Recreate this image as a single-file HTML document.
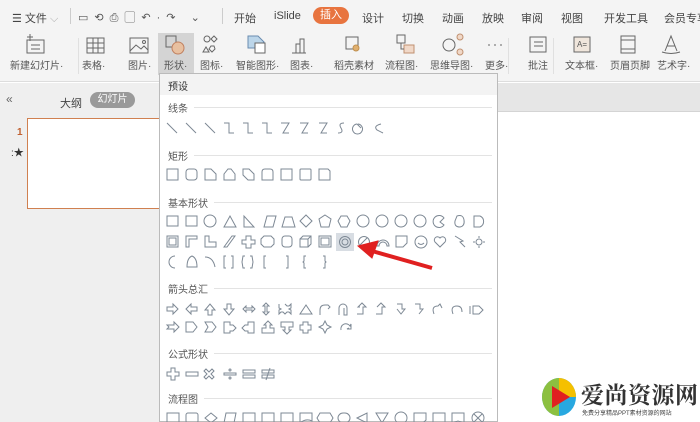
<!DOCTYPE html>
<html><head><meta charset="utf-8"><style>
*{margin:0;padding:0;box-sizing:border-box}
body{width:700px;height:422px;overflow:hidden;position:relative;background:#fff;font-family:"Liberation Sans","Noto Sans CJK SC",sans-serif;color:#333}
.a{position:absolute;white-space:nowrap}
.t{font-size:11px;color:#444}
.lbl{font-size:10px;color:#555}
.sec{position:absolute;left:168px;font-size:10px;color:#555;background:#fff;padding-right:6px}
.ln{position:absolute;left:168px;width:324px;height:1px;background:#e3e3e3}
</style></head><body>
<div class="a" style="left:0;top:0;width:700px;height:32px;background:#f4f4f4"></div>
<div class="a" style="left:0;top:32px;width:700px;height:50px;background:#f4f4f4;border-bottom:1px solid #ddd"></div>
<div class="a t" style="left:12px;top:10px">☰ 文件 <span style="color:#aaa">⌵</span></div>
<div class="a" style="left:70px;top:8px;width:1px;height:16px;background:#ccc"></div>
<div class="a t" style="left:78px;top:9px;letter-spacing:6px;color:#555">▭⟲⎙▢↶·↷ ⌄</div>
<div class="a" style="left:222px;top:8px;width:1px;height:16px;background:#ccc"></div>
<div class="a t" style="left:234px;top:10px">开始</div>
<div class="a t" style="left:274px;top:10px">iSlide</div>
<div class="a" style="left:313px;top:7px;width:36px;height:17px;border-radius:9px;background:#e8743f;color:#fff;font-size:11px;text-align:center;line-height:17px">插入</div>
<div class="a t" style="left:362px;top:10px">设计</div>
<div class="a t" style="left:402px;top:10px">切换</div>
<div class="a t" style="left:442px;top:10px">动画</div>
<div class="a t" style="left:482px;top:10px">放映</div>
<div class="a t" style="left:521px;top:10px">审阅</div>
<div class="a t" style="left:561px;top:10px">视图</div>
<div class="a t" style="left:604px;top:10px">开发工具</div>
<div class="a t" style="left:664px;top:10px">会员专享</div>
<div class="a" style="left:158px;top:33px;width:36px;height:42px;background:#d4d4d4"></div>
<svg class="a" style="left:0;top:32px" width="700" height="30" fill="none" stroke="#666" stroke-width="1">
<rect x="27" y="8" width="17" height="13"/><line x1="31" y1="13" x2="40" y2="13"/><line x1="31" y1="17" x2="40" y2="17"/><path d="M30 2v7M27 5h6"/>
<rect x="87" y="6" width="17" height="15"/><path d="M87 11h17M87 16h17M93 6v15M98 6v15"/>
<rect x="130" y="6" width="18" height="15"/><path d="M130 19l6-6 5 4 3-3 4 4"/><circle cx="144" cy="10" r="1.5"/>
<rect x="166" y="4" width="10" height="11"/><circle cx="178" cy="16" r="6" fill="#e8c0a0" stroke="#c08060"/>
<circle cx="207" cy="7" r="3"/><path d="M214 4l3 3-3 3-3-3z"/><path d="M203 20l3-5 3 5z"/><path d="M211 14l3 0 1 3-3 3-3-3z"/>
<path d="M248 4h10l6 6-6 6h-10z" fill="#bcd6ea" stroke="#6a8cb0"/><rect x="255" y="11" width="10" height="10" fill="#fff"/>
<path d="M296 21V12h4v9M300 21V7h4v14M292 21h14"/>
<path d="M346 5h12v12h-12z"/><circle cx="356" cy="16" r="3" fill="#e0b070" stroke="#c09050"/>
<rect x="397" y="3" width="8" height="8"/><rect x="404" y="13" width="10" height="8" fill="#f0d8c8" stroke="#c09070"/><path d="M401 11v6h3"/>
<circle cx="449" cy="13" r="6"/><circle cx="460" cy="5" r="3" fill="#f0d8c8" stroke="#c09070"/><circle cx="460" cy="20" r="3" fill="#f0d8c8" stroke="#c09070"/>
<path d="M488 13h2M494 13h2M500 13h2"/>
<rect x="530" y="5" width="16" height="15"/><path d="M534 10h9M534 14h9"/>
<rect x="574" y="5" width="16" height="15" fill="#f0e6dc"/><text x="577" y="15" font-size="8" fill="#555" stroke="none" font-family="Liberation Sans">A=</text>
<rect x="621" y="4" width="14" height="17"/><path d="M621 8h14M621 17h14"/>
<path d="M665 19l6-15 6 15M667 14h8"/><path d="M662 20q9 3 18 0"/>
</svg>
<div class="a lbl" style="left:10px;top:57px">新建幻灯片·</div>
<div class="a lbl" style="left:82px;top:57px">表格·</div>
<div class="a lbl" style="left:128px;top:57px">图片·</div>
<div class="a lbl" style="left:164px;top:57px">形状·</div>
<div class="a lbl" style="left:200px;top:57px">图标·</div>
<div class="a lbl" style="left:236px;top:57px">智能图形·</div>
<div class="a lbl" style="left:290px;top:57px">图表·</div>
<div class="a lbl" style="left:334px;top:57px">稻壳素材</div>
<div class="a lbl" style="left:385px;top:57px">流程图·</div>
<div class="a lbl" style="left:430px;top:57px">思维导图·</div>
<div class="a lbl" style="left:485px;top:57px">更多·</div>
<div class="a lbl" style="left:528px;top:57px">批注</div>
<div class="a lbl" style="left:565px;top:57px">文本框·</div>
<div class="a lbl" style="left:610px;top:57px">页眉页脚</div>
<div class="a lbl" style="left:657px;top:57px">艺术字·</div>
<div class="a" style="left:78px;top:38px;width:1px;height:36px;background:#e0e0e0"></div>
<div class="a" style="left:508px;top:38px;width:1px;height:36px;background:#e0e0e0"></div>
<div class="a" style="left:553px;top:38px;width:1px;height:36px;background:#e0e0e0"></div>
<div class="a" style="left:0;top:83px;width:160px;height:339px;background:#efefef"></div>
<div class="a" style="left:6px;top:92px;font-size:12px;color:#666">«</div>
<div class="a t" style="left:60px;top:95px">大纲</div>
<div class="a" style="left:90px;top:92px;width:45px;height:16px;border-radius:8px;background:#9a9a9a;color:#fff;font-size:10px;text-align:center;line-height:16px">幻灯片</div>
<div class="a" style="left:17px;top:127px;font-size:10px;color:#c06030;font-weight:bold">1</div>
<div class="a" style="left:11px;top:144px;font-size:10px;color:#333">:★</div>
<div class="a" style="left:27px;top:118px;width:140px;height:91px;border:1.5px solid #d08050;background:#fff"></div>
<div class="a" style="left:497px;top:83px;width:203px;height:29px;background:#e6e6e6;border-bottom:1px solid #d4d4d4"></div>
<div class="a" style="left:159px;top:73px;width:339px;height:349px;background:#fff;border:1px solid #bbb"></div>
<div class="a" style="left:160px;top:74px;width:337px;height:21px;background:#f3f3f3"></div>
<div class="a" style="left:168px;top:78px;font-size:10px;color:#333">预设</div>
<div class="ln" style="top:107px"></div><div class="sec" style="top:100px">线条</div>
<div class="ln" style="top:155px"></div><div class="sec" style="top:148px">矩形</div>
<div class="ln" style="top:202px"></div><div class="sec" style="top:195px">基本形状</div>
<div class="ln" style="top:288px"></div><div class="sec" style="top:281px">箭头总汇</div>
<div class="ln" style="top:353px"></div><div class="sec" style="top:346px">公式形状</div>
<div class="ln" style="top:398px"></div><div class="sec" style="top:391px">流程图</div>
<svg class="a" style="left:0;top:0" width="700" height="422" fill="none" stroke="#7d8894" stroke-width="1">
<rect x="336" y="233" width="18" height="18" fill="#d8dde3" stroke="none"/>
<g transform="translate(0,128)">
<path d="M167-5l10 10M186-5l10 10M205-5l10 10M224-5h5v10h5M243-5h5v10h5M262-5h5v10h5M281-5h8l-6 10h6M300-5h8l-6 10h6M319-5h8l-6 10h6"/>
<path d="M344-5q-6 0 -3 5t-3 5M358-4a5 5 0 1 1 -1 0l4 4M381-4q-8 2-4 6l6 3"/>
</g>
<g transform="translate(0,169)">
<rect x="167" y="0" width="11" height="11"/><rect x="186" y="0" width="11" height="11" rx="3"/><path d="M205 0h6l5 5v6h-11z"/><path d="M224 11v-6l4-5h3l4 5v6z"/><path d="M243 0h6l5 5v6h-6l-5-5z"/><path d="M262 11v-8q0-3 3-3h5q3 0 3 3v8z"/><rect x="281" y="0" width="11" height="11"/><rect x="300" y="0" width="11" height="11" rx="1"/><path d="M319 0h9l2 2v9h-11z"/>
</g>
<g transform="translate(0,216)">
<rect x="167" y="0" width="11" height="10"/><rect x="186" y="0" width="11" height="10"/><circle cx="210" cy="5" r="6"/><path d="M224 11l6-11 6 11z"/><path d="M244 0v11h10z"/><path d="M264 11l3-11h9l-3 11z"/><path d="M282 11l3-10h7l3 10z"/><path d="M306 -1l6 6-6 6-6-6z"/><path d="M325 -1l6 4-2 8h-8l-2-8z"/><path d="M341 0h6l3 5-3 6h-6l-3-6z"/><circle cx="363" cy="5" r="6"/><circle cx="382" cy="5" r="6"/><circle cx="401" cy="5" r="6"/><circle cx="420" cy="5" r="6"/><path d="M444 2a6 6 0 1 0 0 7l-4-3z"/><path d="M457 0q6-2 7 4t-4 7q-6 0-5-6z"/><path d="M474 11h6a6 6 0 0 0 0-11h-6z"/>
</g>
<g transform="translate(0,236)">
<rect x="167" y="0" width="11" height="11"/><rect x="169" y="2" width="7" height="7"/><path d="M186 11V0h11v3h-8v8z"/><path d="M205 0v11h11v-5h-7V0z"/><path d="M224 11l8-11h3l-8 11z"/><path d="M246 0h5v4h4v4h-4v4h-5v-4h-4v-4h4z"/><path d="M264 0h7l3 3v5l-3 3h-7l-3-3V3z"/><rect x="282" y="0" width="10" height="11" rx="3"/><path d="M300 3h8v8h-8zM300 3l3-3h8v8l-3 3M308 3l3-3"/><rect x="319" y="0" width="12" height="11"/><rect x="321" y="2" width="8" height="7"/><circle cx="345" cy="6" r="5.5"/><circle cx="345" cy="6" r="3"/><circle cx="364" cy="6" r="5.5"/><path d="M360 9l7-7"/><path d="M377 10a6 6 0 0 1 12 0h-2a4 4 0 0 0-8 0z"/><path d="M396 0h11v7l-4 4h-7z"/><circle cx="421" cy="6" r="6"/><path d="M418 7q3 3 6 0"/><path d="M440 11l-5-5a3 3 0 0 1 5-4 3 3 0 0 1 5 4z"/><path d="M455 0l8 5-3 1 5 5"/><circle cx="479" cy="6" r="3"/><path d="M479 0v2M479 10v2M473 6h2M483 6h2"/>
</g>
<g transform="translate(0,256)">
<path d="M175 0a6 6 0 1 0 0 12a5 5 0 0 1 0-12z"/><path d="M187 11q0-9 5-11 5 2 5 11z"/><path d="M205 1q8 0 10 10"/><path d="M226 0h-2v12h2M231 0h2v12h-2"/><path d="M245 0h-2l-1 6 1 6h2M250 0h2l1 6-1 6h-2"/><path d="M266 0h-2v12h2"/><path d="M286 0h2v12h-2"/><path d="M306 0h-2v5l-1 1 1 1v5h2"/><path d="M323 0h2v5l1 1-1 1v5h-2"/>
</g>
<g transform="translate(0,304)">
<path d="M167 3h6v-3l5 5-5 5v-3h-6z"/><path d="M197 3h-6v-3l-5 5 5 5v-3h6z"/><path d="M208 11v-5h-3l5-6 5 6h-3v5z"/><path d="M227 0v5h-3l5 6 5-6h-3V0z"/><path d="M243 5l3-3v2h6v-2l3 3-3 3v-2h-6v2z"/><path d="M266 -1l3 3h-2v6h2l-3 3-3-3h2v-6h-2z"/><path d="M285 0l2 2h2l2-2v4l-2 1 2 1v4l-2-2h-2l-2 2 -2-2h-2l-2 2V6l2-1-2-1V0"/><path d="M300 10h12l-6-9z"/><path d="M320 11v-5q0-5 5-5h3l2 2-2 2"/><path d="M339 11V4a4 4 0 0 1 8 0v7h-3V4"/><path d="M357 10h6V3h3l-4-4-4 4h2"/><path d="M376 10h6V3h3l-4-4-4 4"/><path d="M397 0h5v5h3l-4 5-4-5"/><path d="M415 0h5v5h3l-4 5"/><path d="M434 10q-3-8 4-8l2-2 2 4"/><path d="M453 10q-3-8 4-8 5 0 5 6"/><path d="M473 2h6l4 4-4 4h-6zM470 2v8"/>
</g>
<g transform="translate(0,322)">
<path d="M167 3h7v-3l5 5-5 5v-3h-7l2-2z"/><path d="M186 0h7l4 5-4 5h-7z"/><path d="M205 0h7l4 5-4 5h-7l3-5z"/><path d="M224 0h6v3h3l3 3-3 3h-3v2h-6z"/><path d="M254 0h-6v3h-3l-3 3 3 3h3v2h6z"/><path d="M262 11h12V6h-4V3h2l-4-4-4 4h2v3h-4z"/><path d="M281 0h12v5h-4v3h2l-4 4-4-4h2V5h-4z"/><path d="M303 0h5v3h3v5h-3v3h-5V8h-3V3h3z"/><path d="M325 -1l2 4 4 2-4 2-2 4-2-4-4-2 4-2z"/><path d="M341 8a5 5 0 0 1 9-4l1-2v5h-4l2-1"/>
</g>
<g transform="translate(0,368)">
<path d="M171 0h4v4h4v4h-4v4h-4V8h-4V4h4z"/><rect x="186" y="4" width="12" height="4"/><path d="M206 1l3 3 3-3 2 2-3 3 3 3-2 2-3-3-3 3-2-2 3-3-3-3z"/><rect x="224" y="5" width="12" height="2"/><circle cx="230" cy="2" r="1"/><circle cx="230" cy="10" r="1"/><rect x="243" y="2" width="12" height="3"/><rect x="243" y="7" width="12" height="3"/><path d="M262 2h12v3h-12zM262 7h12v3h-12zM270 0l-4 12"/>
</g>
<g transform="translate(0,413)">
<rect x="167" y="0" width="12" height="10"/><rect x="186" y="0" width="12" height="10" rx="2"/><path d="M205 5l6-5 6 5-6 5z"/><path d="M226 0h10l-2 10h-10z"/><rect x="243" y="0" width="12" height="10"/><rect x="262" y="0" width="12" height="10"/><rect x="281" y="0" width="12" height="10"/><path d="M300 0h12v8q-6-3-12 2z"/><path d="M320 0h10l3 5-3 5h-10l-3-5z"/><rect x="338" y="0" width="12" height="10" rx="5"/><path d="M357 5l10-5v10z"/><path d="M376 0h12l-6 10z"/><circle cx="401" cy="5" r="6"/><path d="M414 0h12v7l-3 3h-9z"/><path d="M433 0h12v10h-12z"/><path d="M452 0h12v10l-6-2-6 2z"/><circle cx="478" cy="5" r="6"/><path d="M474 1l8 8M482 1l-8 8"/>
</g>
<path d="M432 268L372 251" stroke="#e02020" stroke-width="4"/>
<path d="M358 246L378 241L372 258z" fill="#e02020" stroke="#e02020"/>
</svg>
<svg class="a" style="left:540px;top:376px" width="38" height="42">
<ellipse cx="19" cy="21" rx="17" ry="19" fill="#28a8e0"/>
<path d="M19 2A17 19 0 0 1 36 21L19 21z" fill="#f5c000"/>
<path d="M19 2A17 19 0 0 0 2 21 17 19 0 0 0 19 40z" fill="#8cc040"/>
<path d="M12 10L30 21 12 32z" fill="#e02020"/>
</svg>
<div class="a" style="left:581px;top:377px;font-family:'Noto Serif CJK SC',serif;font-size:23px;font-weight:bold;color:#333;letter-spacing:0.5px">爱尚资源网</div>
<div class="a" style="left:582px;top:408px;font-size:6px;color:#444">免费分享精品PPT素材资源的网站</div>
</body></html>
